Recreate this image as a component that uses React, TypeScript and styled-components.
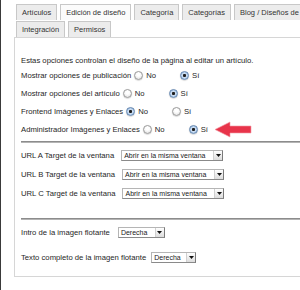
import React from 'react';
import styled, { createGlobalStyle } from 'styled-components';

const Global = createGlobalStyle`
  html, body { margin: 0; padding: 0; background: #fff; overflow: hidden; }
  body { font-family: "Liberation Sans", Arial, sans-serif; }
  #root { width: 300px; height: 290px; overflow: hidden; }
`;

const Page = styled.div`
  box-sizing: border-box;
  width: 300px;
  height: 290px;
  border-left: 1px solid #3a3a3a;
  padding: 4px 0 0 13px;
  overflow: hidden;
`;

const TabRow = styled.div`
  display: flex;
  gap: 3px;
  margin-left: 2px;
  margin-bottom: 1px;
`;

const Tab = styled.div<{ $active?: boolean }>`
  box-sizing: border-box;
  flex-shrink: 0;
  height: 16px;
  padding: 0 5px;
  border: 1px solid #c8c8c8;
  border-bottom: none;
  background: ${(p) => (p.$active ? '#fbfbfb' : '#ececec')};
  font-size: 7.5px;
  line-height: 15px;
  color: #333;
  white-space: nowrap;
`;

const Panel = styled.div`
  box-sizing: border-box;
  width: 310px;
  height: 240px;
  margin-top: -1px;
  border: 1px solid #d6d6d6;
  background: #fff;
  padding: 18px 0 0 6px;
  font-size: 7.7px;
  color: #262626;
`;

const Intro = styled.p`
  margin: 0;
  line-height: 10px;
  white-space: nowrap;
`;

const OptionRow = styled.div`
  position: relative;
  display: flex;
  align-items: center;
  height: 18px;
  white-space: nowrap;
`;

const Radio = styled.span<{ $checked?: boolean; $ml: number }>`
  box-sizing: border-box;
  display: inline-block;
  flex-shrink: 0;
  width: 9px;
  height: 9px;
  border-radius: 50%;
  margin-left: ${(p) => p.$ml}px;
  border: 1px solid ${(p) => (p.$checked ? '#6487b0' : '#9a9a9a')};
  background: ${(p) =>
    p.$checked
      ? 'radial-gradient(circle, #1e1e1e 0 1.3px, #cfe0f3 1.8px, #8fb4de 100%)'
      : 'radial-gradient(circle at 50% 35%, #ffffff 0 30%, #d9d9d9 100%)'};
  box-shadow: 0 0.5px 1px rgba(0, 0, 0, 0.25);
`;

const Choice = styled.span`
  margin-left: 3px;
`;

const Arrow = styled.svg`
  position: absolute;
  left: 193px;
  top: 1px;
`;

const Separator = styled.div<{ $mt: number }>`
  height: 0;
  margin-top: ${(p) => p.$mt}px;
  border-top: 1px solid #8c8c8c;
  border-bottom: 1px solid #b4b4b4;
`;

const UrlRow = styled.div<{ $first?: boolean }>`
  display: flex;
  align-items: center;
  height: 19px;
  margin-top: ${(p) => (p.$first ? 3 : 0)}px;
  white-space: nowrap;
`;

const FloatRow = styled.div<{ $mt: number }>`
  display: flex;
  align-items: center;
  height: 14px;
  margin-top: ${(p) => p.$mt}px;
  white-space: nowrap;
`;

const Select = styled.div<{ $w: number; $ml: number }>`
  box-sizing: border-box;
  display: flex;
  align-items: stretch;
  flex-shrink: 0;
  width: ${(p) => p.$w}px;
  height: 11px;
  margin-left: ${(p) => p.$ml}px;
  border: 1px solid #b5b5b5;
  border-right-color: #7a7a7a;
  border-bottom-color: #8a8a8a;
  background: #fff;
  font-size: 7px;
  color: #1a1a1a;
`;

const SelectText = styled.span`
  flex: 1;
  padding-left: 2px;
  line-height: 9px;
  overflow: hidden;
`;

const SelectButton = styled.span`
  width: 8px;
  border-left: 1px solid #d0d0d0;
  background: linear-gradient(#ffffff, #dcdcdc);
  display: flex;
  align-items: center;
  justify-content: center;
`;

const Caret = () => (
  <svg width="5" height="3" viewBox="0 0 5 3">
    <path d="M0 0 H5 L2.5 3 Z" fill="#111" />
  </svg>
);

const Dropdown = ({ text, w, ml }: { text: string; w: number; ml: number }) => (
  <Select $w={w} $ml={ml}>
    <SelectText>{text}</SelectText>
    <SelectButton>
      <Caret />
    </SelectButton>
  </Select>
);

type Opt = { label: string; noChecked: boolean; arrow?: boolean };

const options: Opt[] = [
  { label: 'Mostrar opciones de publicación', noChecked: false },
  { label: 'Mostrar opciones del artículo', noChecked: false },
  { label: 'Frontend Imágenes y Enlaces', noChecked: true },
  { label: 'Administrador Imágenes y Enlaces', noChecked: false, arrow: true },
];

export default function App() {
  return (
    <>
      <Global />
      <Page>
        <TabRow>
          <Tab>Artículos</Tab>
          <Tab $active>Edición de diseño</Tab>
          <Tab>Categoría</Tab>
          <Tab>Categorías</Tab>
          <Tab>Blog / Diseños de lista</Tab>
        </TabRow>
        <TabRow>
          <Tab>Integración</Tab>
          <Tab>Permisos</Tab>
        </TabRow>
        <Panel>
          <Intro>Estas opciones controlan el diseño de la página al editar un artículo.</Intro>
          {options.map((o) => (
            <OptionRow key={o.label}>
              {o.label}
              <Radio $ml={3} $checked={o.noChecked} />
              <Choice>No</Choice>
              <Radio $ml={24} $checked={!o.noChecked} />
              <Choice>Sí</Choice>
              {o.arrow && (
                <Arrow width="38" height="17" viewBox="0 0 38 17">
                  <path
                    d="M1 8.5 L16 1 L16 5 L37 5 L37 12 L16 12 L16 16 Z"
                    fill="#e8344a"
                    stroke="#f19aa4"
                    strokeWidth="0.6"
                  />
                </Arrow>
              )}
            </OptionRow>
          ))}
          <Separator $mt={3} />
          {['A', 'B', 'C'].map((l, i) => (
            <UrlRow key={l} $first={i === 0}>
              URL {l} Target de la ventana
              <Dropdown text="Abrir en la misma ventana" w={102} ml={7} />
            </UrlRow>
          ))}
          <Separator $mt={15} />
          <FloatRow $mt={5}>
            Intro de la imagen flotante
            <Dropdown text="Derecha" w={47} ml={8} />
          </FloatRow>
          <FloatRow $mt={11}>
            Texto completo de la imagen flotante
            <Dropdown text="Derecha" w={45} ml={5} />
          </FloatRow>
        </Panel>
      </Page>
    </>
  );
}
